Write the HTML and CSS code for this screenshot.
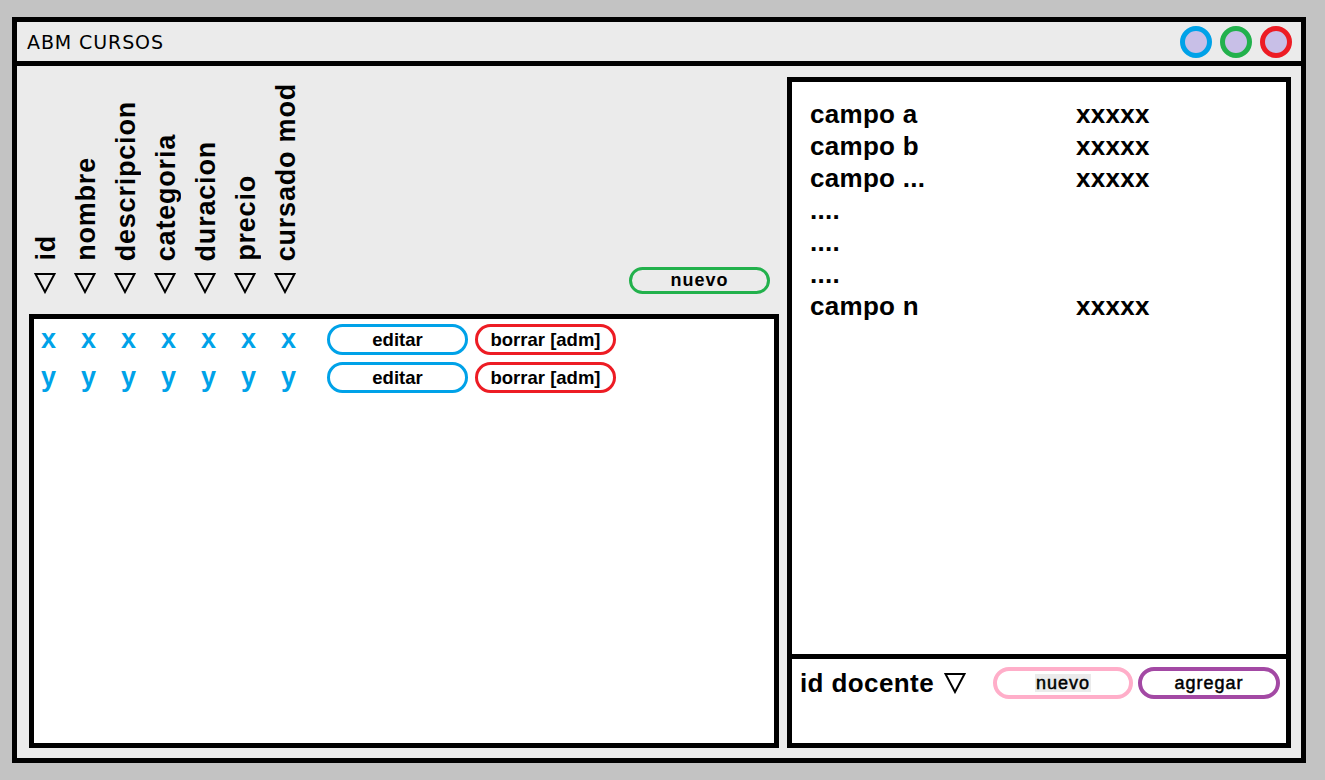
FILE: index.html
```html
<!DOCTYPE html>
<html lang="es">
<head>
<meta charset="utf-8">
<title>ABM CURSOS</title>
<link rel="stylesheet" href="styles.css">
</head>
<body>
<div class="window">
  <div class="titlebar">
    <span class="title">ABM CURSOS</span>
    <div class="winbtns">
      <span class="wb wb-blue"></span>
      <span class="wb wb-green"></span>
      <span class="wb wb-red"></span>
    </div>
  </div>
  <div class="main">
    <div class="left">
      <div class="head">
        <div class="col"><span class="vtext">id</span><svg class="tri" viewBox="0 0 22 22"><polygon points="1.5,2 20.5,2 11,20" /></svg></div>
        <div class="col"><span class="vtext">nombre</span><svg class="tri" viewBox="0 0 22 22"><polygon points="1.5,2 20.5,2 11,20" /></svg></div>
        <div class="col"><span class="vtext">descripcion</span><svg class="tri" viewBox="0 0 22 22"><polygon points="1.5,2 20.5,2 11,20" /></svg></div>
        <div class="col"><span class="vtext">categoria</span><svg class="tri" viewBox="0 0 22 22"><polygon points="1.5,2 20.5,2 11,20" /></svg></div>
        <div class="col"><span class="vtext">duracion</span><svg class="tri" viewBox="0 0 22 22"><polygon points="1.5,2 20.5,2 11,20" /></svg></div>
        <div class="col"><span class="vtext">precio</span><svg class="tri" viewBox="0 0 22 22"><polygon points="1.5,2 20.5,2 11,20" /></svg></div>
        <div class="col"><span class="vtext">cursado mod</span><svg class="tri" viewBox="0 0 22 22"><polygon points="1.5,2 20.5,2 11,20" /></svg></div>
        <span class="pill pill-green">nuevo</span>
      </div>
      <div class="table">
        <div class="row">
          <span class="cell">x</span><span class="cell">x</span><span class="cell">x</span><span class="cell">x</span><span class="cell">x</span><span class="cell">x</span><span class="cell">x</span>
          <span class="pill pill-blue">editar</span>
          <span class="pill pill-red">borrar [adm]</span>
        </div>
        <div class="row">
          <span class="cell">y</span><span class="cell">y</span><span class="cell">y</span><span class="cell">y</span><span class="cell">y</span><span class="cell">y</span><span class="cell">y</span>
          <span class="pill pill-blue">editar</span>
          <span class="pill pill-red">borrar [adm]</span>
        </div>
      </div>
    </div>
    <div class="right">
      <div class="details">
        <span>campo a</span><span>xxxxx</span>
        <span>campo b</span><span>xxxxx</span>
        <span>campo ...</span><span>xxxxx</span>
        <span>....</span><span></span>
        <span>....</span><span></span>
        <span>....</span><span></span>
        <span>campo n</span><span>xxxxx</span>
      </div>
      <div class="footer">
        <span class="label">id docente <svg class="tri" viewBox="0 0 22 22"><polygon points="1.5,2 20.5,2 11,20" /></svg></span>
        <span class="pill pill-pink"><span class="hl">nuevo</span></span>
        <span class="pill pill-purple">agregar</span>
      </div>
    </div>
  </div>
</div>
</body>
</html>
```

FILE: styles.css
```css
html, body {
  margin: 0;
  padding: 0;
}
body {
  background: #c3c3c3;
  padding: 17px 0 0 12px;
  font-family: "Liberation Sans", Arial, sans-serif;
  color: #000;
}
.window {
  box-sizing: border-box;
  width: 1294px;
  height: 746px;
  border: 5px solid #000;
  background: #ebebeb;
  display: flex;
  flex-direction: column;
}
.titlebar {
  height: 39px;
  border-bottom: 5px solid #000;
  display: flex;
  align-items: center;
  padding: 0 9px 0 10px;
  flex: none;
}
.title {
  font-family: "DejaVu Sans", sans-serif;
  font-size: 19px;
  letter-spacing: 0.9px;
  padding-top: 1px;
}
.winbtns {
  margin-left: auto;
  display: flex;
  gap: 8px;
}
.wb {
  box-sizing: border-box;
  width: 32px;
  height: 32px;
  border-radius: 50%;
  border: 5px solid;
  background: #c8bfe7;
}
.wb-blue { border-color: #00a2e8; }
.wb-green { border-color: #22b14c; }
.wb-red { border-color: #ed1c24; }

.main {
  flex: 1;
  display: flex;
  gap: 8px;
  padding: 11px 10px 10px 12px;
  min-height: 0;
}
.left {
  width: 750px;
  display: flex;
  flex-direction: column;
}
.head {
  height: 237px;
  box-sizing: border-box;
  display: flex;
  align-items: flex-end;
  padding: 0 0 20px 2px;
  flex: none;
}
.col {
  width: 40px;
  display: flex;
  flex-direction: column;
  align-items: flex-start;
}
.vtext {
  writing-mode: vertical-rl;
  transform: rotate(180deg);
  font-size: 27px;
  font-weight: bold;
  line-height: 27px;
  letter-spacing: 0.8px;
  white-space: nowrap;
  margin-left: 2px;
}
.tri {
  width: 22px;
  height: 22px;
  display: block;
  flex: none;
}
.tri polygon {
  fill: none;
  stroke: #000;
  stroke-width: 2;
}
.col .tri {
  margin: 11px 0 0 3px;
}
.pill {
  box-sizing: border-box;
  display: flex;
  align-items: center;
  justify-content: center;
  width: 141px;
  height: 31px;
  border: 3px solid;
  border-radius: 16px;
  background: #fff;
  font-weight: bold;
  font-size: 18.5px;
  white-space: nowrap;
}
.pill-green {
  border-color: #22b14c;
  background: transparent;
  height: 27px;
  margin: 0 9px 0 auto;
  font-size: 18px;
  letter-spacing: 1px;
}
.pill-blue { border-color: #00a2e8; margin-left: 6px; width: 141px; }
.pill-red { border-color: #ed1c24; margin-left: 7px; }

.table {
  flex: 1;
  background: #fff;
  border: 5px solid #000;
  padding: 5px 0 0 7px;
}
.row {
  display: flex;
  align-items: center;
  height: 31px;
  margin-bottom: 7px;
}
.cell {
  width: 40px;
  color: #00a2e8;
  font-size: 27px;
  font-weight: bold;
  line-height: 33px;
}

.right {
  flex: 1;
  background: #fff;
  border: 5px solid #000;
  display: flex;
  flex-direction: column;
}
.details {
  flex: 1;
  display: grid;
  grid-template-columns: 266px auto;
  align-content: start;
  padding: 16px 0 0 18px;
  font-size: 26px;
  font-weight: bold;
  line-height: 32px;
  letter-spacing: 0.3px;
}
.footer {
  box-sizing: border-box;
  height: 89px;
  flex: none;
  border-top: 5px solid #000;
  display: flex;
  align-items: flex-start;
  padding: 8px 0 0 8px;
}
.label {
  display: flex;
  align-items: center;
  gap: 10px;
  font-size: 26px;
  font-weight: bold;
  line-height: 32px;
  letter-spacing: 0.4px;
  white-space: nowrap;
}
.pill-pink {
  border: 4px solid #ffaec9;
  height: 32px;
  width: 140px;
  margin-left: auto;
  font-size: 18px;
  font-weight: normal;
  letter-spacing: 1px;
  -webkit-text-stroke: 0.5px #000;
}
.hl {
  background: #ebebeb;
  padding: 0 1px;
  line-height: 18px;
}
.pill-purple {
  border: 4px solid #a349a4;
  height: 32px;
  width: 142px;
  margin-left: 5px;
  margin-right: 6px;
  font-size: 18px;
  font-weight: normal;
  letter-spacing: 1px;
  -webkit-text-stroke: 0.5px #000;
}
```
